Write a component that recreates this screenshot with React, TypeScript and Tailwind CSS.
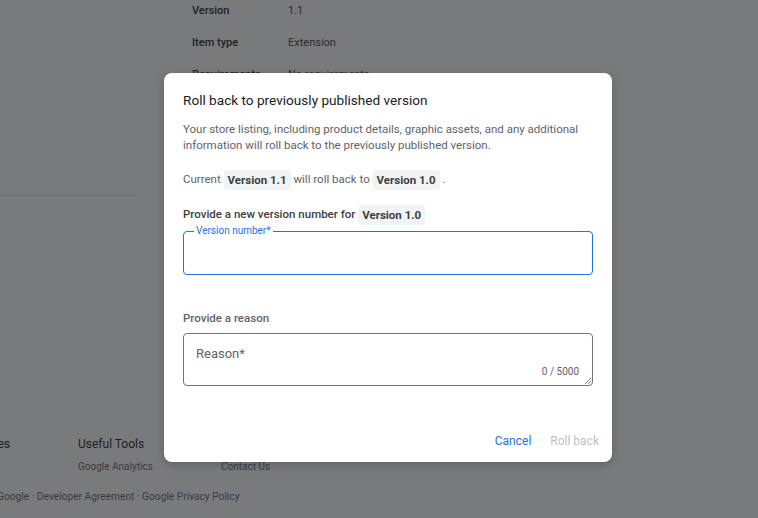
import React from "react";

function Chip({ children }: { children: React.ReactNode }) {
  return (
    <span className="inline-block rounded-[3px] bg-[#f1f3f4] px-[4px] py-[2px] font-bold text-[#3c4043] leading-[16px]">
      {children}
    </span>
  );
}

export default function App() {
  return (
    <div
      className="relative h-[518px] w-[758px] overflow-hidden bg-white text-[#202124]"
      style={{ fontFamily: "Roboto, 'Liberation Sans', sans-serif" }}
    >
      {/* underlying page */}
      <div className="flex flex-col">
        <div className="ml-[192px] flex flex-col text-[11px] leading-[16px]">
          <div className="flex h-[32px] items-center -mt-[5px]">
            <span className="w-[96px] font-medium text-[#202124]">Version</span>
            <span className="text-[#3c4043]">1.1</span>
          </div>
          <div className="flex h-[32px] items-center">
            <span className="w-[96px] font-medium text-[#202124]">Item type</span>
            <span className="text-[#3c4043]">Extension</span>
          </div>
          <div className="flex h-[32px] items-center">
            <span className="w-[96px] font-medium text-[#202124]">Requirements</span>
            <span className="text-[#3c4043]">No requirements</span>
          </div>
        </div>
        <div className="mt-[104px] h-px w-[136px] bg-[#dadce0]" />
        <div className="mt-[240px] flex text-[12px] leading-[16px] text-[#202124]">
          <div className="-ml-[46px] w-[124px]">
            <div>Resources</div>
          </div>
          <div className="flex flex-col">
            <div>Useful Tools</div>
            <div className="mt-[9px] flex text-[10px] leading-[12px] text-[#5f6368]">
              <span className="w-[143px]">Google Analytics</span>
              <span>Contact Us</span>
            </div>
          </div>
        </div>
        <div className="-ml-[3px] mt-[17px] text-[10.2px] leading-[14px] text-[#5f6368]">
          Google · Developer Agreement · Google Privacy Policy
        </div>
      </div>

      {/* overlay */}
      <div className="absolute inset-0 bg-[rgba(32,33,36,0.6)]" />

      {/* dialog */}
      <div className="absolute left-[164px] top-[73px] flex w-[448px] flex-col rounded-[8px] bg-white pl-[19px] pr-[19px] pt-[17px] pb-[9px] shadow-[0_3px_10px_rgba(0,0,0,0.2)]">
        <h2 className="text-[13.6px] leading-[20px] text-[#202124]">
          Roll back to previously published version
        </h2>
        <p className="mt-[11px] text-[11.5px] leading-[16px] text-[#5f6368]">
          Your store listing, including product details, graphic assets, and any additional
          information will roll back to the previously published version.
        </p>
        <p className="mt-[17px] flex h-[20px] items-center text-[11.5px] text-[#5f6368]">
          <span>Current&nbsp;</span>
          <Chip>Version 1.1</Chip>
          <span>&nbsp;will roll back to&nbsp;</span>
          <Chip>Version 1.0</Chip>
          <span>&nbsp;.</span>
        </p>
        <p className="mt-[15px] flex h-[20px] items-center text-[11.5px] font-medium text-[#3c4043]">
          <span>Provide a new version number for&nbsp;</span>
          <Chip>Version 1.0</Chip>
        </p>
        <div className="relative mt-[6px] h-[44px] w-[410px] rounded-[4px] border-[1.5px] border-[#1a73e8]">
          <span className="absolute -top-[7px] left-[10px] bg-white px-[2px] text-[10px] leading-[12px] text-[#1a73e8]">
            Version number*
          </span>
        </div>
        <div className="mt-[35px] text-[11.5px] font-medium leading-[16px] text-[#5f6368]">
          Provide a reason
        </div>
        <div className="relative mt-[7px] h-[53px] w-[410px] rounded-[4px] border border-[#757575]">
          <span className="absolute left-[12px] top-[12px] text-[13px] leading-[16px] text-[#5f6368]">
            Reason*
          </span>
          <span className="absolute right-[13px] top-[32px] text-[10px] leading-[12px] text-[#5f6368]">
            0 / 5000
          </span>
          <svg className="absolute bottom-[1px] right-[1px]" width="7" height="7" viewBox="0 0 7 7">
            <line x1="1" y1="7" x2="7" y2="1" stroke="#5f6368" strokeWidth="0.8" />
            <line x1="4" y1="7" x2="7" y2="4" stroke="#5f6368" strokeWidth="0.8" />
          </svg>
        </div>
        <div className="mt-[43px] -mr-[6px] flex h-[24px] items-center justify-end gap-[19px] text-[12px]">
          <span className="text-[#1a73e8]">Cancel</span>
          <span className="text-[#bdc1c6]">Roll back</span>
        </div>
      </div>
    </div>
  );
}
